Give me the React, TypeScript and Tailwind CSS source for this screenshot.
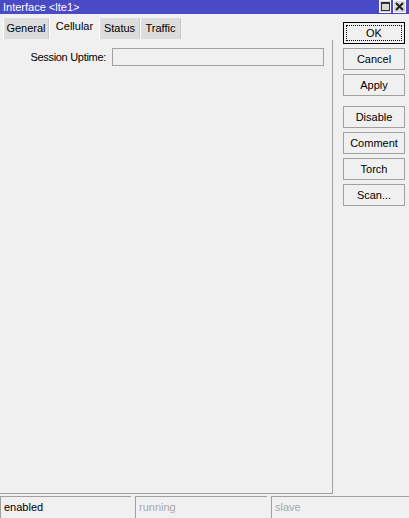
import React from "react";

const font = { fontFamily: '"Liberation Sans", Arial, sans-serif' };

function Btn({ label, focus }: { label: string; focus?: boolean }) {
  return (
    <div
      className={`h-[22px] w-[62px] flex items-center justify-center bg-[#f0f0f0] text-[11px] text-black ${
        focus ? "border border-black" : "border border-[#a0a0a0]"
      }`}
    >
      {focus ? (
        <div className="w-[56px] h-[16px] border border-dotted border-black flex items-center justify-center">
          {label}
        </div>
      ) : (
        label
      )}
    </div>
  );
}

export default function App() {
  const tabs = ["General", "Cellular", "Status", "Traffic"];
  const active = "Cellular";

  return (
    <div className="w-[409px] h-[518px] flex flex-col bg-[#f0f0f0] overflow-hidden select-none" style={font}>
      {/* Title bar */}
      <div className="h-[14px] bg-[#4a4ac6] flex items-center pl-[3px] pr-[3px]">
        <span className="text-white text-[11px] leading-none flex-1">Interface &lt;lte1&gt;</span>
        <div className="flex gap-[2px] items-start h-[14px]">
          <div className="w-[12px] h-[13px] bg-[#d8d8d8] border border-[#f8f8f8] flex items-center justify-center">
            <svg width="9" height="9" viewBox="0 0 9 9">
              <rect x="0.5" y="0.5" width="8" height="8" fill="none" stroke="#303030" />
              <line x1="0" y1="1.5" x2="9" y2="1.5" stroke="#303030" />
            </svg>
          </div>
          <div className="w-[13px] h-[13px] bg-[#d8d8d8] border border-[#f8f8f8] flex items-center justify-center">
            <svg width="9" height="9" viewBox="0 0 9 9">
              <path d="M1 1 L8 8 M8 1 L1 8" stroke="#202020" strokeWidth="2" />
            </svg>
          </div>
        </div>
      </div>

      {/* Body */}
      <div className="flex-1 flex">
        {/* Left: tabs + panel */}
        <div className="w-[333px] flex flex-col">
          <div className="h-[26px] flex items-end pl-[3px]">
            {tabs.map((t) => (
              <div
                key={t}
                className={`flex items-center justify-center text-[11px] text-black border-l border-white ${
                  t === active
                    ? "h-[24px] bg-[#f0f0f0] pb-[3px]"
                    : "h-[21px] mb-[1px] bg-[#dcdcdc] border-r border-r-[#c8c8c8]"
                } ${
                  t === "General" ? "w-[46px]" : t === "Cellular" ? "w-[50px]" : "w-[41px]"
                }`}
              >
                {t}
              </div>
            ))}
          </div>
          <div className="h-[454px] border-r border-b border-[#a0a0a0] pt-[8px]">
            <div className="flex items-center gap-[6px]">
              <div className="w-[106px] text-right text-[11px] tracking-[-0.3px] text-black">Session Uptime:</div>
              <div className="w-[212px] h-[18px] border border-[#a0a0a0] bg-[#f0f0f0]" />
            </div>
          </div>
        </div>

        {/* Right: buttons */}
        <div className="pl-[10px] pt-[8px] flex flex-col gap-[4px]">
          <Btn label="OK" focus />
          <Btn label="Cancel" />
          <Btn label="Apply" />
          <div className="h-[2px]" />
          <Btn label="Disable" />
          <Btn label="Comment" />
          <Btn label="Torch" />
          <Btn label="Scan..." />
        </div>
      </div>

      {/* Status bar */}
      <div className="h-[22px] flex gap-[4px] text-[11px]">
        <div className="w-[131px] border-t border-l border-[#a0a0a0] flex items-center pl-[3px] text-black">enabled</div>
        <div className="w-[132px] border-t border-l border-[#a0a0a0] flex items-center pl-[3px] text-[#a8a8a8]">running</div>
        <div className="flex-1 border-t border-l border-[#a0a0a0] flex items-center pl-[3px] text-[#a8a8a8]">slave</div>
      </div>
    </div>
  );
}
